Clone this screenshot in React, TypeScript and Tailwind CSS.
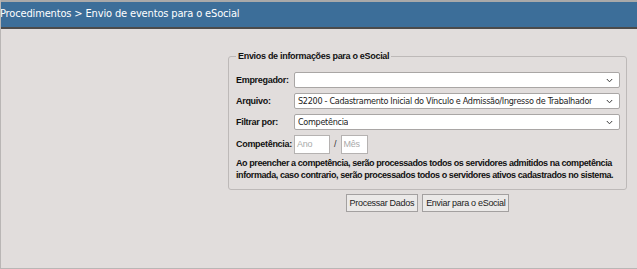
const Chevron = () => (
    <svg width="7" height="5" viewBox="0 0 7 5" className="shrink-0">
        <path d="M0.8 1 L3.5 3.8 L6.2 1" fill="none" stroke="#3a3a3a" strokeWidth="1"/>
    </svg>
);

const Select = ({value}: { value?: string }) => (
    <div className="flex h-[16px] min-w-0 flex-1 items-center justify-between rounded-[2px] border border-[#a9a6a5] bg-white pl-[3px] pr-[6px]">
        <span className="truncate text-[9px] leading-none tracking-[-0.3px] text-[#222]"
              style={{fontFamily: '"DejaVu Sans Condensed", sans-serif'}}>{value}</span>
        <Chevron/>
    </div>
);

const Label = ({children}: { children: string }) => (
    <span className="w-[58px] shrink-0 whitespace-nowrap text-[9px] font-bold leading-none tracking-[-0.3px] text-[#111]">{children}</span>
);

const App = () => {
    return (
        <div className="flex h-[269px] w-[637px] flex-col overflow-hidden border-b border-l border-[#b9b6b5] bg-[#e1dddc]"
             style={{fontFamily: '"Liberation Sans", Arial, sans-serif'}}>
            <div className="flex h-[29px] shrink-0 items-center border-t-2 border-b-2 border-t-[#a9a9a9] border-b-[#4b4b4b] bg-[#3c6e99]">
                <span className="-ml-[1px] text-[11px] tracking-[-0.15px] text-white"
                      style={{fontFamily: '"DejaVu Sans Condensed", sans-serif'}}>
                    Procedimentos &gt; Envio de eventos para o eSocial
                </span>
            </div>

            <div className="ml-[227px] mt-[21px] flex w-[399px] flex-col items-center">
                <fieldset className="w-full min-w-0 rounded-[3px] border border-[#bdb9b8] pb-[8px] pl-[7px] pr-[6px] pt-[10px]">
                    <legend className="px-[2px] text-[9px] font-bold leading-[12px] tracking-[-0.3px] text-[#111]">
                        Envios de informações para o eSocial
                    </legend>
                    <div className="flex flex-col gap-[5px]">
                        <div className="flex items-center">
                            <Label>Empregador:</Label>
                            <Select/>
                        </div>
                        <div className="flex items-center">
                            <Label>Arquivo:</Label>
                            <Select value="S2200 - Cadastramento Inicial do Vínculo e Admissão/Ingresso de Trabalhador"/>
                        </div>
                        <div className="flex items-center">
                            <Label>Filtrar por:</Label>
                            <Select value="Competência"/>
                        </div>
                        <div className="flex items-center">
                            <Label>Competência:</Label>
                            <div className="flex h-[19px] w-[36px] items-center border border-[#b5b2b1] bg-white pl-[2px] text-[9px] tracking-[-0.3px] text-[#aaa]">Ano</div>
                            <span className="mx-[4px] text-[9px] text-[#333]">/</span>
                            <div className="flex h-[19px] w-[27px] items-center border border-[#b5b2b1] bg-white pl-[2px] text-[9px] tracking-[-0.3px] text-[#aaa]">Mês</div>
                        </div>
                    </div>
                    <p className="mt-[4px] whitespace-nowrap text-[9px] font-bold leading-[11.5px] tracking-[-0.42px] text-[#111]">
                        Ao preencher a competência, serão processados todos os servidores admitidos na competência<br/>
                        informada, caso contrario, serão processados todos o servidores ativos cadastrados no sistema.
                    </p>
                </fieldset>

                <div className="mt-[4px] flex gap-[4px]">
                    <button className="h-[18px] border border-[#a3a0a0] bg-[#ebe9e8] px-[3px] text-[9px] leading-none tracking-[-0.3px] text-[#222]">
                        Processar Dados
                    </button>
                    <button className="h-[18px] border border-[#a3a0a0] bg-[#ebe9e8] px-[3px] text-[9px] leading-none tracking-[-0.3px] text-[#222]">
                        Enviar para o eSocial
                    </button>
                </div>
            </div>
        </div>
    );
};

export default App;
